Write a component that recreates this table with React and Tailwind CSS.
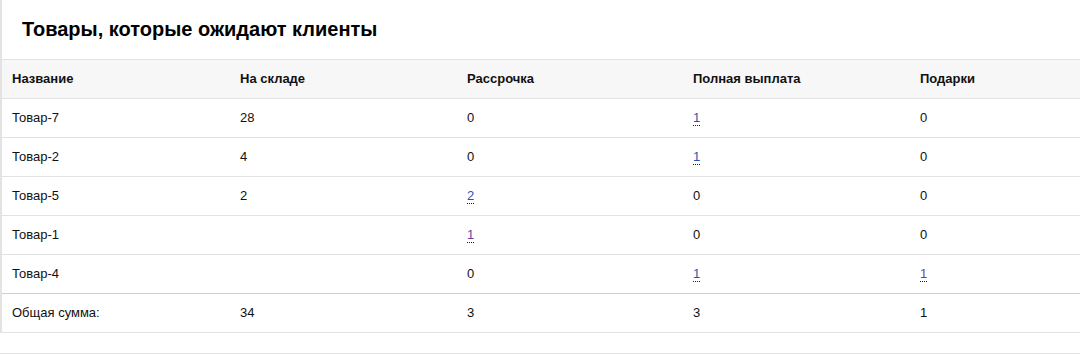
import React from "react";

const rows = [
  { name: "Товар-7", stock: "28", inst: { v: "0" }, full: { v: "1", link: true }, gift: { v: "0" } },
  { name: "Товар-2", stock: "4", inst: { v: "0" }, full: { v: "1", link: true }, gift: { v: "0" } },
  { name: "Товар-5", stock: "2", inst: { v: "2", link: true }, full: { v: "0" }, gift: { v: "0" } },
  { name: "Товар-1", stock: "", inst: { v: "1", link: true, visited: true }, full: { v: "0" }, gift: { v: "0" } },
  { name: "Товар-4", stock: "", inst: { v: "0" }, full: { v: "1", link: true }, gift: { v: "1", link: true, visited: true } },
];

function Val({ c }) {
  if (!c.link) return <span>{c.v}</span>;
  return (
    <a
      href="#"
      className={
        (c.visited ? "text-[#6b3fa0] " : "text-[#1a56b8] ") +
        "no-underline border-b border-dotted border-[#0000ee] leading-[14px] inline-block"
      }
    >
      {c.v}
    </a>
  );
}

const cols = "grid grid-cols-[228px_227px_226px_227px_1fr]";

export default function App() {
  return (
    <div className="w-[1080px] h-[354px] bg-white text-[#111] font-['Liberation_Sans',Arial,sans-serif] overflow-hidden">
      <div className="border-l-2 border-[#e3e3e3]">
        <div className="h-[59px] flex items-center pl-[20px] pb-[1px]">
          <h2 className="text-[20px] font-bold text-black">Товары, которые ожидают клиенты</h2>
        </div>
        <div className={cols + " h-[40px] items-center bg-[#f7f7f7] border-y border-[#e3e3e3] text-[13px] font-bold"}>
          <div className="pl-[10px]">Название</div>
          <div className="pl-[10px]">На складе</div>
          <div className="pl-[10px]">Рассрочка</div>
          <div className="pl-[10px]">Полная выплата</div>
          <div className="pl-[10px]">Подарки</div>
        </div>
        {rows.map((r, i) => (
          <div
            key={r.name}
            className={cols + " h-[39px] items-center text-[13px] border-b " + (i < rows.length - 1 ? "border-[#e3e3e3]" : "border-[#cfcfcf]")}
          >
            <div className="pl-[10px]">{r.name}</div>
            <div className="pl-[10px]">{r.stock}</div>
            <div className="pl-[10px]"><Val c={r.inst} /></div>
            <div className="pl-[10px]"><Val c={r.full} /></div>
            <div className="pl-[10px]"><Val c={r.gift} /></div>
          </div>
        ))}
        <div className={cols + " h-[39px] items-center text-[13px] border-b border-[#e3e3e3]"}>
          <div className="pl-[10px]">Общая сумма:</div>
          <div className="pl-[10px]">34</div>
          <div className="pl-[10px]">3</div>
          <div className="pl-[10px]">3</div>
          <div className="pl-[10px]">1</div>
        </div>
      </div>
      <div className="h-[21px] border-b border-[#e3e3e3]" />
    </div>
  );
}
